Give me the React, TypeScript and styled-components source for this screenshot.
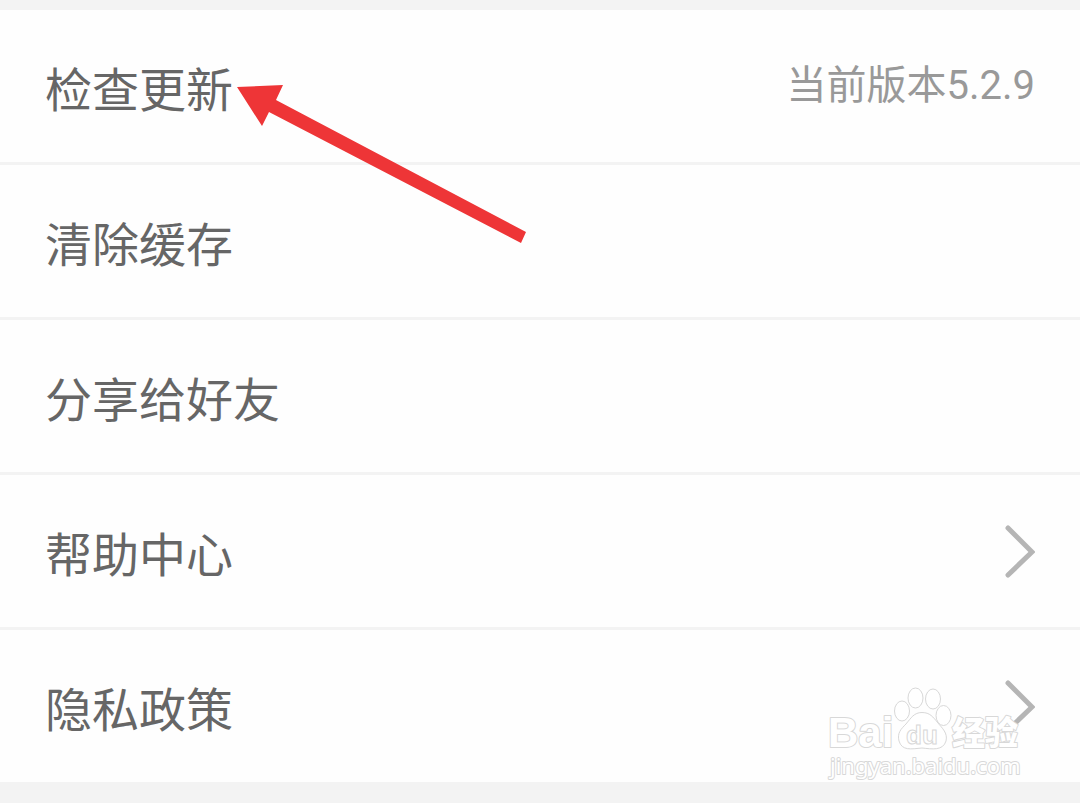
import React from "react";
import styled, { createGlobalStyle } from "styled-components";

const GlobalStyle = createGlobalStyle`
  body {
    margin: 0;
    background: #f3f3f3;
    font-family: Roboto, "Noto Sans CJK SC", sans-serif;
  }
`;

const Page = styled.main`
  position: relative;
  padding: 10px 0 21px;
  overflow: hidden;
`;

const List = styled.ul`
  margin: 0;
  padding: 0;
  list-style: none;
  background: #fefefe;
`;

const Item = styled.li`
  & + & {
    border-top: 3px solid #f3f3f3;
  }
`;

const Row = styled.button`
  display: flex;
  align-items: center;
  justify-content: space-between;
  width: 100%;
  height: 152px;
  padding: 0 45px;
  border: 0;
  background: transparent;
  font-family: inherit;
  text-align: left;
  cursor: pointer;
`;

const Label = styled.span`
  padding-top: 10px;
  color: #666;
  font-size: 47px;
  line-height: 60px;
`;

const Version = styled.span`
  color: #999;
  font-size: 40px;
  line-height: 52px;
`;

const Chevron = styled.svg`
  width: 30px;
  height: 54px;
  fill: none;
  stroke: #b5b5b5;
  stroke-width: 5;
  stroke-linecap: round;
  margin-top: 2px;
`;

const Pointer = styled.svg`
  position: absolute;
  top: 80px;
  left: 232px;
  width: 300px;
  height: 170px;
  fill: #ee3537;
  pointer-events: none;
`;

const Watermark = styled.svg`
  position: absolute;
  right: 54px;
  bottom: 19px;
  width: 200px;
  height: 100px;
  fill: rgba(255, 255, 255, 0.65);
  stroke: #d8d8d8;
  stroke-width: 1;
  pointer-events: none;
`;

const Mark = styled.text`
  fill: #fff;
  stroke-width: 2;
  stroke-linejoin: round;
  paint-order: stroke;
`;

type Entry = { label: string; version?: string; more?: boolean };

const entries: Entry[] = [
  { label: "检查更新", version: "当前版本5.2.9" },
  { label: "清除缓存" },
  { label: "分享给好友" },
  { label: "帮助中心", more: true },
  { label: "隐私政策", more: true },
];

export default function App() {
  return (
    <>
      <GlobalStyle />
      <Page>
        <List>
          {entries.map(({ label, version, more }) => (
            <Item key={label}>
              <Row type="button">
                <Label>{label}</Label>
                {version && <Version>{version}</Version>}
                {more && (
                  <Chevron viewBox="0 0 30 54" aria-hidden="true">
                    <path d="M3 3 L27 27 L3 50" />
                  </Chevron>
                )}
              </Row>
            </Item>
          ))}
        </List>

        <Pointer viewBox="232 80 300 170" aria-hidden="true">
          <path d="M237 87 L283 85 L276 100 L526 232 L521 243 L269 112 L262 126 Z" />
        </Pointer>

        <Watermark viewBox="826 684 200 100" aria-hidden="true">
          <ellipse cx="902" cy="711" rx="7.5" ry="10" />
          <ellipse cx="915.5" cy="698" rx="7.5" ry="10" />
          <ellipse cx="933" cy="699" rx="7.5" ry="10" />
          <ellipse cx="943.5" cy="715.5" rx="7.5" ry="10" />
          <path d="M922 712.5 C914 712.5 911 718 906 724 C901 729 897 733 899 741 C902 751 911 749 922 748 C932 749 943 751 946 741 C948 733 942 728 938 723 C933 717 930 712.5 922 712.5 Z" />
          <Mark x="828" y="747" fontFamily="Liberation Sans" fontWeight="700" fontSize="42">
            Bai
          </Mark>
          <text x="906" y="744" fontFamily="Liberation Sans" fontWeight="700" fontSize="26">
            du
          </text>
          <Mark x="952" y="745" fontFamily="Noto Sans CJK SC" fontWeight="900" fontSize="33">
            经验
          </Mark>
          <Mark x="830" y="774" fontFamily="Noto Sans" fontSize="22">
            jingyan.baidu.com
          </Mark>
        </Watermark>
      </Page>
    </>
  );
}
